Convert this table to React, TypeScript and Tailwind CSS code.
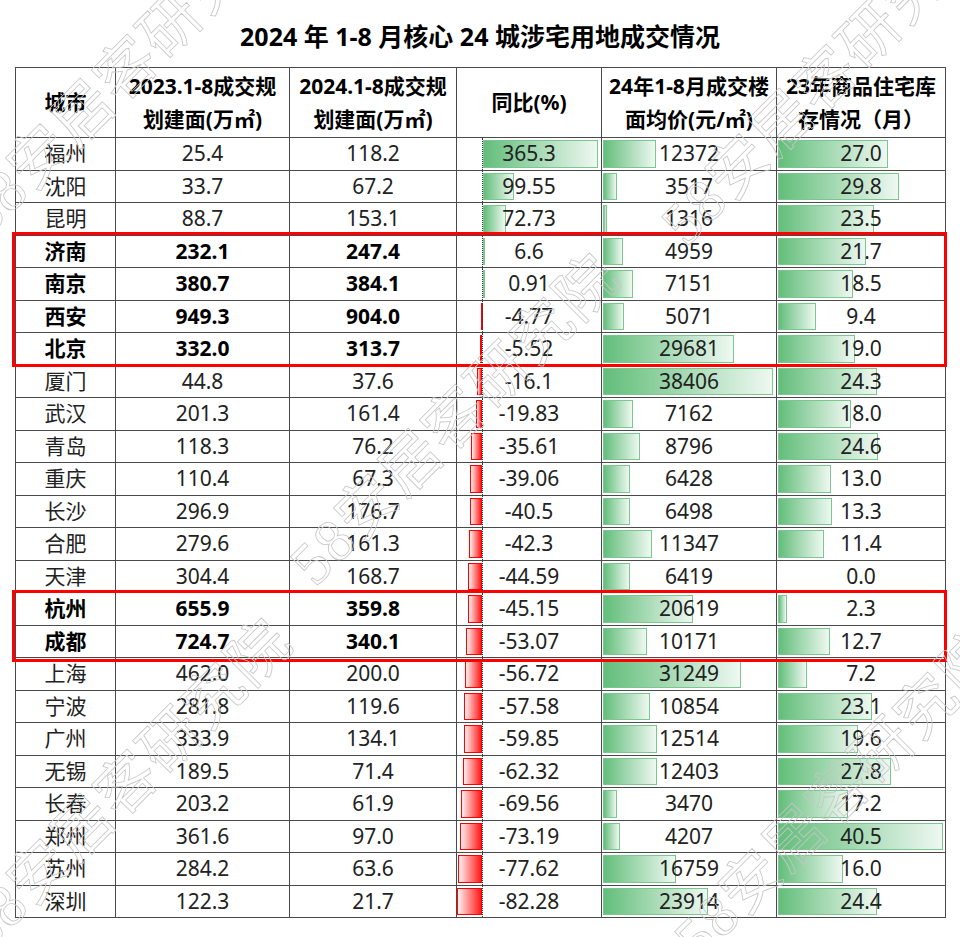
import React from "react";

type Row = { c: string; a: string; b: string; y: number; p: number; s: number; hl?: boolean };

const rows: Row[] = [
  { c: "福州", a: "25.4", b: "118.2", y: 365.3, p: 12372, s: 27.0 },
  { c: "沈阳", a: "33.7", b: "67.2", y: 99.55, p: 3517, s: 29.8 },
  { c: "昆明", a: "88.7", b: "153.1", y: 72.73, p: 1316, s: 23.5 },
  { c: "济南", a: "232.1", b: "247.4", y: 6.6, p: 4959, s: 21.7, hl: true },
  { c: "南京", a: "380.7", b: "384.1", y: 0.91, p: 7151, s: 18.5, hl: true },
  { c: "西安", a: "949.3", b: "904.0", y: -4.77, p: 5071, s: 9.4, hl: true },
  { c: "北京", a: "332.0", b: "313.7", y: -5.52, p: 29681, s: 19.0, hl: true },
  { c: "厦门", a: "44.8", b: "37.6", y: -16.1, p: 38406, s: 24.3 },
  { c: "武汉", a: "201.3", b: "161.4", y: -19.83, p: 7162, s: 18.0 },
  { c: "青岛", a: "118.3", b: "76.2", y: -35.61, p: 8796, s: 24.6 },
  { c: "重庆", a: "110.4", b: "67.3", y: -39.06, p: 6428, s: 13.0 },
  { c: "长沙", a: "296.9", b: "176.7", y: -40.5, p: 6498, s: 13.3 },
  { c: "合肥", a: "279.6", b: "161.3", y: -42.3, p: 11347, s: 11.4 },
  { c: "天津", a: "304.4", b: "168.7", y: -44.59, p: 6419, s: 0.0 },
  { c: "杭州", a: "655.9", b: "359.8", y: -45.15, p: 20619, s: 2.3, hl: true },
  { c: "成都", a: "724.7", b: "340.1", y: -53.07, p: 10171, s: 12.7, hl: true },
  { c: "上海", a: "462.0", b: "200.0", y: -56.72, p: 31249, s: 7.2 },
  { c: "宁波", a: "281.8", b: "119.6", y: -57.58, p: 10854, s: 23.1 },
  { c: "广州", a: "333.9", b: "134.1", y: -59.85, p: 12514, s: 19.6 },
  { c: "无锡", a: "189.5", b: "71.4", y: -62.32, p: 12403, s: 27.8 },
  { c: "长春", a: "203.2", b: "61.9", y: -69.56, p: 3470, s: 17.2 },
  { c: "郑州", a: "361.6", b: "97.0", y: -73.19, p: 4207, s: 40.5 },
  { c: "苏州", a: "284.2", b: "63.6", y: -77.62, p: 16759, s: 16.0 },
  { c: "深圳", a: "122.3", b: "21.7", y: -82.28, p: 23914, s: 24.4 },
];

const cols = "grid grid-cols-[100px_174px_167px_145px_175px_169px]";
const cell = "relative flex items-center justify-center border-r border-b border-[#4a4a4a]";
const greenBar =
  "absolute top-[2px] bottom-[2px] border border-[#7cc690] bg-[linear-gradient(to_right,#63be7b,#eef8f1)]";
const redBar =
  "absolute top-[2px] bottom-[2px] border border-[#ff0000] bg-[linear-gradient(to_left,#ff1a1a,#fff0f0)]";

function DataRow({ r }: { r: Row }) {
  const txt = r.hl ? "font-bold text-black" : "text-[#222]";
  const yw = r.y >= 0 ? r.y * 0.315 : -r.y * 0.304;
  const pw = 4 + (166 * (r.p - 1316)) / 37090;
  const sw = r.s * 4.07;
  return (
    <div className={`${cols} h-[32.5px]`}>
      <div className={`${cell} ${txt}`}>{r.c}</div>
      <div className={`${cell} ${txt}`}>{r.a}</div>
      <div className={`${cell} ${txt}`}>{r.b}</div>
      <div className={`${cell} text-[#222]`}>
        {r.y >= 0 ? (
          <div className={greenBar} style={{ left: 26, width: yw }} />
        ) : (
          <div className={redBar} style={{ left: 25 - yw, width: yw }} />
        )}
        <div className="absolute top-0 bottom-0 left-[25px] border-l border-dotted border-[#333]" />
        <span className="relative">{r.y.toString()}</span>
      </div>
      <div className={`${cell} text-[#222]`}>
        <div className={greenBar} style={{ left: 1, width: pw }} />
        <span className="relative">{r.p}</span>
      </div>
      <div className={`${cell} text-[#222]`}>
        {r.s > 0 && <div className={greenBar} style={{ left: 1, width: sw }} />}
        <span className="relative">{r.s.toFixed(1)}</span>
      </div>
    </div>
  );
}

const marks: string[] = [
  "left-[-6px] top-[185px]",
  "left-[693px] top-[195px]",
  "left-[322px] top-[535px]",
  "left-[-6px] top-[900px]",
  "left-[706px] top-[910px]",
];

export default function App() {
  return (
    <div className="relative w-[960px] h-[937px] overflow-hidden bg-white font-['Noto_Sans','Noto_Sans_CJK_SC',sans-serif]">
      <div className="flex h-[67px] items-center justify-center pt-[7px] text-[25px] font-bold text-black">
        2024 年 1-8 月核心 24 城涉宅用地成交情况
      </div>
      <div className="relative ml-[15px] w-[931px] border-l border-t border-[#4a4a4a] text-[21px]">
        <div className={`${cols} h-[70px] font-bold text-black leading-[33px]`}>
          <div className={cell}>城市</div>
          <div className={`${cell} flex-col`}>
            <span>2023.1-8成交规</span>
            <span>划建面(万㎡)</span>
          </div>
          <div className={`${cell} flex-col`}>
            <span>2024.1-8成交规</span>
            <span>划建面(万㎡)</span>
          </div>
          <div className={cell}>同比(%)</div>
          <div className={`${cell} flex-col`}>
            <span>24年1-8月成交楼</span>
            <span>面均价(元/㎡)</span>
          </div>
          <div className={`${cell} flex-col`}>
            <span>23年商品住宅库</span>
            <span>存情况（月）</span>
          </div>
        </div>
        {rows.map((r) => (
          <DataRow key={r.c} r={r} />
        ))}
        <div className="pointer-events-none absolute left-[-4px] top-[164px] h-[135px] w-[935px] border-[3px] border-[#ff0000]" />
        <div className="pointer-events-none absolute left-[-4px] top-[522px] h-[72px] w-[935px] border-[3px] border-[#ff0000]" />
      </div>
      {marks.map((m, i) => (
        <div
          key={i}
          className={`pointer-events-none absolute ${m} h-[60px] origin-bottom-left -rotate-45 whitespace-nowrap text-[60px] leading-none tracking-[2px] text-transparent [-webkit-text-stroke:0.8px_#c6c6c6] font-['Liberation_Serif','Noto_Sans_CJK_SC',serif]`}
        >
          58安居客研究院
        </div>
      ))}
    </div>
  );
}
